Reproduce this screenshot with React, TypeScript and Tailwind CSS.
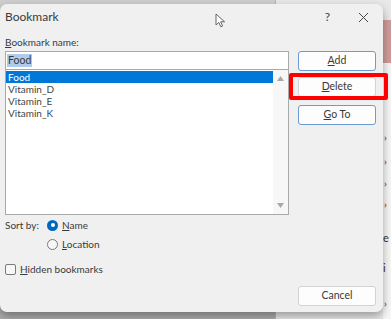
const font = { fontFamily: 'Lato, "Noto Sans", sans-serif' };

const DlgButton = ({ label, mnemonic, blue }: { label: string; mnemonic?: number; blue?: boolean }) => {
    const i = mnemonic ?? -1;
    return (
        <div
            className={`flex h-[20px] w-[78px] items-center justify-center rounded-[3px] border bg-[#fdfdfd] text-[10.5px] text-[#3a3a3a] ${
                blue ? "border-[#6d9bd3]" : "border-[#d2d2d2]"
            }`}
        >
            {i >= 0 ? (
                <span>
                    {label.slice(0, i)}
                    <span className="underline underline-offset-1">{label[i]}</span>
                    {label.slice(i + 1)}
                </span>
            ) : (
                label
            )}
        </div>
    );
};

const App = () => {
    return (
        <div className="relative h-[319px] w-[391px] overflow-hidden bg-[#cfcfcf]" style={font}>
            {/* background: desktop / document behind the dialog */}
            <div className="absolute left-[275px] top-0 h-full w-[116px] bg-[#e9e9e9] border-l border-[#b8b8b8]" />
            <div className="absolute left-0 top-[300px] h-[19px] w-[275px] bg-[#adadad]" />
            <div className="absolute left-[383px] top-[20px] h-[43px] w-[8px] bg-[#d29b9b]" />
            <div className="absolute left-[383px] top-[63px] h-[256px] w-[8px] bg-[#f7f7f7]" />
            {[90, 137, 161, 183, 204, 303].map((y) => (
                <span key={y} className="absolute left-[384px] text-[10px] font-bold leading-none text-[#b04a5a]" style={{ top: y - 5 }}>
                    ›
                </span>
            ))}
            <span className="absolute left-[383px] top-[232px] text-[11px] leading-none text-[#333]">e</span>
            <span className="absolute left-[383px] top-[262px] text-[11px] leading-none text-[#333]">i</span>

            {/* dialog */}
            <div className="absolute left-0 top-[4px] flex h-[308px] w-[383px] flex-col rounded-[7px] bg-[#f0f0f0] shadow-[0_4px_10px_rgba(0,0,0,0.35)]">
                <div className="relative flex h-[26px] items-center pl-[5px] pr-[14px]">
                    <span className="text-[12px] text-[#3a3a3a]">Bookmark</span>
                    <svg className="absolute left-[215px] top-[9px]" width="11" height="15" viewBox="0 0 11 15">
                        <path d="M1 1 L1 12 L3.8 9.4 L5.8 13.8 L7.6 13 L5.7 8.8 L9.6 8.8 Z" fill="#fff" stroke="#555" strokeWidth="0.9" strokeLinejoin="round" />
                    </svg>
                    <div className="ml-auto flex items-center gap-[28px]">
                        <span className="text-[12px] text-[#444]">?</span>
                        <svg width="11" height="11" viewBox="0 0 11 11">
                            <path d="M1 1 L10 10 M10 1 L1 10" stroke="#444" strokeWidth="1" />
                        </svg>
                    </div>
                </div>

                <div className="flex">
                    <div className="ml-[5px] flex w-[284px] flex-col">
                        <div className="flex h-[21px] items-center pt-[3px] text-[10px] text-[#3a3a3a]">
                            <span>
                                <span className="underline underline-offset-1">B</span>ookmark name:
                            </span>
                        </div>
                        <div className="flex h-[19px] items-center border border-[#a9a9a9] bg-white pl-[1px] text-[10.5px]">
                            <span className="bg-[#aecbe9] px-[1px] leading-[13px] text-[#3a3a3a]">Food</span>
                        </div>
                        <div className="-mt-px flex h-[146px] border border-[#a9a9a9] bg-white">
                            <div className="flex flex-1 flex-col pt-px text-[10px] leading-[12px] text-[#444]">
                                <div className="h-[12px] bg-[#0078d7] pl-[2px] text-white">Food</div>
                                <div className="h-[12px] pl-[2px]">Vitamin_D</div>
                                <div className="h-[12px] pl-[2px]">Vitamin_E</div>
                                <div className="h-[12px] pl-[2px]">Vitamin_K</div>
                            </div>
                            <div className="flex w-[15px] flex-col items-center justify-between bg-[#f7f7f7] py-[6px]">
                                <svg width="7" height="5" viewBox="0 0 7 5">
                                    <path d="M0 5 L3.5 0 L7 5 Z" fill="#a8a8a8" />
                                </svg>
                                <svg width="7" height="5" viewBox="0 0 7 5">
                                    <path d="M0 0 L3.5 5 L7 0 Z" fill="#a8a8a8" />
                                </svg>
                            </div>
                        </div>
                        <div className="flex text-[10px] text-[#3a3a3a]">
                            <span className="flex h-[20px] w-[42px] items-center">Sort by:</span>
                            <div className="flex flex-col">
                                <div className="flex h-[20px] items-center gap-[4px]">
                                    <span className="flex h-[11px] w-[11px] items-center justify-center rounded-full bg-[#0067c0]">
                                        <span className="h-[4px] w-[4px] rounded-full bg-white" />
                                    </span>
                                    <span>
                                        <span className="underline underline-offset-1">N</span>ame
                                    </span>
                                </div>
                                <div className="flex h-[19px] items-center gap-[4px]">
                                    <span className="h-[11px] w-[11px] rounded-full border border-[#7a7a7a] bg-[#f7f7f7]" />
                                    <span>
                                        <span className="underline underline-offset-1">L</span>ocation
                                    </span>
                                </div>
                            </div>
                        </div>
                        <div className="mt-[5px] flex h-[20px] items-center gap-[4px] text-[10px] text-[#3a3a3a]">
                            <span className="h-[11px] w-[11px] rounded-[2px] border border-[#7a7a7a] bg-[#f7f7f7]" />
                            <span>
                                <span className="underline underline-offset-1">H</span>idden bookmarks
                            </span>
                        </div>
                    </div>

                    <div className="ml-[9px] flex flex-col pt-[21px]">
                        <DlgButton label="Add" mnemonic={0} blue />
                        <div className="relative mt-[6px]">
                            <DlgButton label="Delete" mnemonic={0} />
                            <div className="absolute left-[-9px] top-[-4px] h-[27px] w-[99px] rounded-[2px] border-[4px] border-[#ff0000]" />
                        </div>
                        <div className="mt-[8px]">
                            <DlgButton label="Go To" mnemonic={0} blue />
                        </div>
                    </div>
                </div>

                <div className="mt-auto flex justify-end pb-[6px] pr-[7px]">
                    <DlgButton label="Cancel" />
                </div>
            </div>
        </div>
    );
};

export default App;
